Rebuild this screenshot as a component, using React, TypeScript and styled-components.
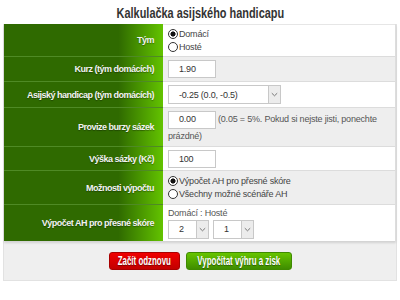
import React from 'react';
import styled, { createGlobalStyle } from 'styled-components';

const GlobalStyle = createGlobalStyle`
  body {
    margin: 0;
    background: #fff;
    font-family: 'Liberation Sans', Arial, sans-serif;
  }
`;

const rows = [
  { label: 'Tým', kind: 'team', height: 32 },
  { label: 'Kurz (tým domácích)', kind: 'odds', height: 25 },
  { label: 'Asijský handicap (tým domácích)', kind: 'handicap', height: 26 },
  { label: 'Provize burzy sázek', kind: 'fee', height: 39 },
  { label: 'Výška sázky (Kč)', kind: 'stake', height: 24 },
  { label: 'Možnosti výpočtu', kind: 'mode', height: 34 },
  { label: 'Výpočet AH pro přesné skóre', kind: 'score', height: 37 }
];

const Chevron = () => (
  <svg width="7" height="5" viewBox="0 0 7 5">
    <path d="M0.8 1.2 L3.5 3.8 L6.2 1.2" fill="none" stroke="#777" strokeWidth="1" />
  </svg>
);

const Select = ({ value, width }: { value: string; width: number }) => (
  <SelectBox width={width}>
    <SelectValue>{value}</SelectValue>
    <SelectArrow>
      <Chevron />
    </SelectArrow>
  </SelectBox>
);

const Radio = ({ checked, text }: { checked?: boolean; text: string }) => (
  <RadioLine>
    <RadioDot checked={checked} />
    {text}
  </RadioLine>
);

const renderField = (kind: string) => {
  switch (kind) {
    case 'team':
      return (
        <>
          <Radio checked text="Domácí" />
          <Radio text="Hosté" />
        </>
      );
    case 'odds':
      return <Input>1.90</Input>;
    case 'handicap':
      return <Select value="-0.25 (0.0, -0.5)" width={113} />;
    case 'fee':
      return (
        <FeeText>
          <Input inline>0.00</Input>
          <Hint>(0.05 = 5%. Pokud si nejste jisti, ponechte prázdné)</Hint>
        </FeeText>
      );
    case 'stake':
      return <Input>100</Input>;
    case 'mode':
      return (
        <>
          <Radio checked text="Výpočet AH pro přesné skóre" />
          <Radio text="Všechny možné scénáře AH" />
        </>
      );
    default:
      return (
        <>
          <ScoreCaption>Domácí : Hosté</ScoreCaption>
          <ScoreSelects>
            <Select value="2" width={41} />
            <Select value="1" width={41} />
          </ScoreSelects>
        </>
      );
  }
};

const App = () => {
  return (
    <>
      <GlobalStyle />
      <Page>
        <Title>
          <Narrow squeeze={0.78}>Kalkulačka asijského handicapu</Narrow>
        </Title>
        <Panel>
          <Table>
            {rows.map((r, i) => (
              <React.Fragment key={r.kind}>
                <LabelCell first={i === 0} style={{ height: r.height }}>
                  {r.label}
                </LabelCell>
                <FieldCell first={i === 0} shaded={i % 2 === 1} style={{ height: r.height }}>
                  {renderField(r.kind)}
                </FieldCell>
              </React.Fragment>
            ))}
          </Table>
          <Actions>
            <Button tone="red" width={71}>
              <Narrow squeeze={0.66}>Začít odznovu</Narrow>
            </Button>
            <Button tone="green" width={106}>
              <Narrow squeeze={0.66}>Vypočítat výhru a zisk</Narrow>
            </Button>
          </Actions>
        </Panel>
      </Page>
    </>
  );
};

export default App;

const Page = styled.div`
  width: 394px;
  padding: 0 3px;
`;

const Title = styled.h1`
  margin: 0;
  height: 24px;
  line-height: 26px;
  text-align: center;
  font-size: 14px;
  font-weight: bold;
  color: #333;
`;

// condensed face is not installed, so squeeze the regular one
const Narrow = styled.span<{ squeeze: number }>`
  display: inline-block;
  white-space: nowrap;
  transform: scaleX(${(p) => p.squeeze});
`;

const Panel = styled.div`
  background: #efefef;
  border: 1px solid #e2e2e2;
  border-top: none;
`;

const Table = styled.div`
  display: grid;
  grid-template-columns: 159px 1fr;
  background: #fff;
  box-shadow: 0 2px 2px rgba(0, 0, 0, 0.12);
  border-right: 1px solid #ddd;
`;

interface CellProps {
  first?: boolean;
  shaded?: boolean;
}

const LabelCell = styled.div<CellProps>`
  display: flex;
  align-items: center;
  justify-content: flex-end;
  box-sizing: border-box;
  padding-right: 9px;
  background: linear-gradient(to right, #2f6a00 0%, #2f6a00 72%, #63c300 100%);
  border-top: ${(p) => (p.first ? 'none' : '1px solid #4f8a25')};
  color: #f2f2f2;
  font-size: 9px;
  letter-spacing: -0.5px;
  font-weight: bold;
  text-shadow: 0 1px 1px rgba(0, 0, 0, 0.35);
  white-space: nowrap;
`;

const FieldCell = styled.div<CellProps>`
  display: flex;
  flex-direction: column;
  justify-content: center;
  box-sizing: border-box;
  padding-left: 5px;
  background: ${(p) => (p.shaded ? '#eeeeee' : '#ffffff')};
  border-top: ${(p) => (p.first ? '1px solid #e6e6e6' : '1px solid #dcdcdc')};
  color: #444;
  font-size: 9px;
  letter-spacing: -0.2px;
`;

const Input = styled.div<{ inline?: boolean }>`
  display: ${(p) => (p.inline ? 'inline-flex' : 'flex')};
  align-items: center;
  box-sizing: border-box;
  width: 48px;
  height: 18px;
  padding-left: 10px;
  background: #fff;
  border: 1px solid #c8c8c8;
  color: #333;
  vertical-align: middle;
`;

const FeeText = styled.div`
  line-height: 15px;
  padding-right: 8px;
`;

const Hint = styled.span`
  margin-left: 2px;
  color: #555;
`;

const SelectBox = styled.div<{ width: number }>`
  display: flex;
  box-sizing: border-box;
  width: ${(p) => p.width}px;
  height: 19px;
  background: #fff;
  border: 1px solid #c8c8c8;
`;

const SelectValue = styled.div`
  flex: 1;
  display: flex;
  align-items: center;
  padding-left: 10px;
  color: #333;
`;

const SelectArrow = styled.div`
  width: 11px;
  display: flex;
  align-items: center;
  justify-content: center;
  background: #ececec;
  border-left: 1px solid #c8c8c8;
`;

const RadioLine = styled.div`
  display: flex;
  align-items: center;
  height: 13px;
  color: #444;
`;

const RadioDot = styled.span<{ checked?: boolean }>`
  box-sizing: border-box;
  width: 10px;
  height: 10px;
  margin-right: 1px;
  border: 1px solid #333;
  border-radius: 50%;
  background: ${(p) => (p.checked ? 'radial-gradient(circle, #111 0 2.3px, #fff 2.8px)' : '#fff')};
`;

const ScoreCaption = styled.div`
  color: #555;
  margin-bottom: 2px;
`;

const ScoreSelects = styled.div`
  display: flex;
  gap: 4px;
`;

const Actions = styled.div`
  display: flex;
  justify-content: center;
  gap: 6px;
  padding: 11px 0 10px;
`;

const Button = styled.div<{ tone: 'red' | 'green'; width: number }>`
  display: flex;
  align-items: center;
  justify-content: center;
  box-sizing: border-box;
  width: ${(p) => p.width}px;
  height: 18px;
  border-radius: 3px;
  border: 1px solid ${(p) => (p.tone === 'red' ? '#a80000' : '#3f8a00')};
  background: ${(p) =>
    p.tone === 'red'
      ? 'linear-gradient(to bottom, #f00000, #c20000)'
      : 'linear-gradient(to bottom, #66c400, #3f8d00)'};
  color: #fff;
  font-size: 12px;
  font-weight: bold;
  text-shadow: 0 1px 1px rgba(0, 0, 0, 0.4);
`;
